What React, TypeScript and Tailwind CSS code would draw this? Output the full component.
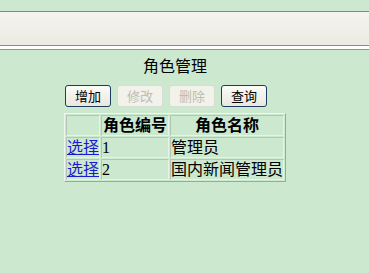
export default function App() {
  const rows = [
    { id: "1", name: "管理员" },
    { id: "2", name: "国内新闻管理员" },
  ];

  const cell =
    "p-0 border border-t-[#b3c6b5] border-l-[#b3c6b5] border-r-[#e6f3e7] border-b-[#e6f3e7] whitespace-nowrap";

  return (
    <div className="w-[369px] h-[273px] bg-[#cce8cf] overflow-hidden font-['Noto_Sans_CJK_SC',sans-serif]">
      <div className="h-[11px]" />
      {/* top frame bar */}
      <div className="h-[34px] border-t border-[#7d8c7f] bg-gradient-to-b from-[#f4f4f0] to-[#ecebe2]" />
      <div className="h-[5px] border-t border-b border-t-[#878a86] border-b-[#8d968e] bg-white" />

      <div className="ml-[64px] w-[222px] mt-[5px]">
        <div className="text-center text-[16px] leading-[20px] text-black">角色管理</div>

        <div className="mt-[10px] ml-px flex gap-[6px]">
          <button className="w-[46px] h-[22px] pb-px rounded-[3px] border border-[#1f3c5f] bg-gradient-to-b from-[#fbfbf8] to-[#e9e8df] text-[13px] leading-none text-black">
            增加
          </button>
          <button className="w-[46px] h-[22px] pb-px rounded-[3px] border border-[#d6ddd2] bg-[#f2f1ea] text-[13px] leading-none text-[#bcbdb5]">
            修改
          </button>
          <button className="w-[46px] h-[22px] pb-px rounded-[3px] border border-[#d6ddd2] bg-[#f2f1ea] text-[13px] leading-none text-[#bcbdb5]">
            删除
          </button>
          <button className="w-[46px] h-[22px] pb-px rounded-[3px] border border-[#1f3c5f] bg-gradient-to-b from-[#fbfbf8] to-[#e9e8df] text-[13px] leading-none text-black">
            查询
          </button>
        </div>

        <table className="mt-[6px] w-[222px] table-fixed border-separate border-spacing-[1px] border border-t-[#eef7ef] border-l-[#eef7ef] border-r-[#9aa99b] border-b-[#9aa99b] text-[16px] leading-[19px] font-['Liberation_Serif','Noto_Sans_CJK_SC',serif]">
          <colgroup>
            <col className="w-[34px]" />
            <col className="w-[68px]" />
            <col className="w-[114px]" />
          </colgroup>
          <thead>
            <tr>
              <th className={cell} />
              <th className={`${cell} font-bold text-center`}>角色编号</th>
              <th className={`${cell} font-bold text-center`}>角色名称</th>
            </tr>
          </thead>
          <tbody>
            {rows.map((r) => (
              <tr key={r.id}>
                <td className={cell}>
                  <a href="#" className="text-[#1a1ad0] underline">选择</a>
                </td>
                <td className={cell}>{r.id}</td>
                <td className={cell}>{r.name}</td>
              </tr>
            ))}
          </tbody>
        </table>
      </div>
    </div>
  );
}
